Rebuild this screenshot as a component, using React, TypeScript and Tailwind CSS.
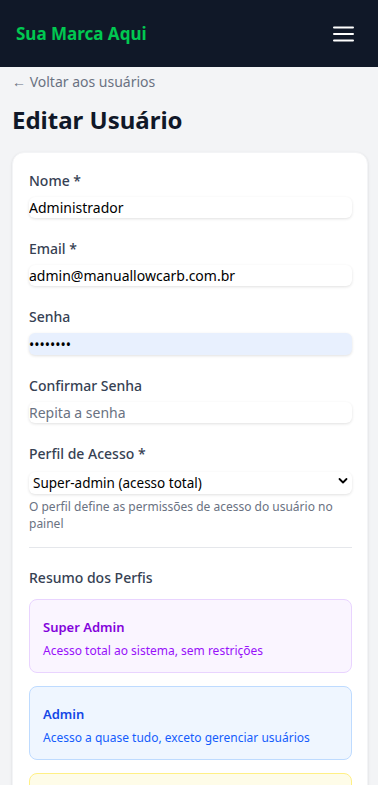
import React from "react";

function Field({ label, children }: { label: string; children: React.ReactNode }) {
  return (
    <div className="flex flex-col">
      <label className="text-sm leading-5 font-medium text-gray-700 mb-[6px]">{label}</label>
      {children}
    </div>
  );
}

const inputCls =
  "w-full h-[21px] rounded-md shadow-[0_1px_3px_rgba(0,0,0,0.12)] text-[14px] leading-[21px] text-black outline-none bg-white";

export default function App() {
  return (
    <div className="min-h-[785px] bg-gray-100" style={{ fontFamily: '"Noto Sans", "Open Sans", sans-serif' }}>
      <header className="h-[67px] bg-gray-900 flex items-center justify-between pl-4 pr-[24px]">
        <span className="text-green-500 font-bold text-[17px]">Sua Marca Aqui</span>
        <svg width="21" height="16" viewBox="0 0 21 16">
          <path d="M1 1.5h19M1 8h19M1 14.5h19" stroke="white" strokeWidth="2" strokeLinecap="round" />
        </svg>
      </header>
      <main className="pl-3 pr-[10px] pt-[5px]">
        <a className="block text-sm leading-5 text-gray-500">← Voltar aos usuários</a>
        <h1 className="mt-3 text-2xl leading-8 font-bold text-gray-900">Editar Usuário</h1>
        <div className="mt-4 bg-white rounded-xl shadow-sm border border-gray-100 pl-4 pr-[15px] pt-[18px] pb-4">
          <div className="flex flex-col gap-[21px]">
            <Field label="Nome *">
              <input className={inputCls} defaultValue="Administrador" />
            </Field>
            <Field label="Email *">
              <input className={inputCls} defaultValue="admin@manuallowcarb.com.br" />
            </Field>
            <Field label="Senha">
              <input type="password" className={inputCls + " !bg-[#e8f0fe] h-[22px]"} defaultValue="12345678" />
            </Field>
            <Field label="Confirmar Senha">
              <input type="password" className={inputCls + " placeholder:text-gray-500"} placeholder="Repita a senha" />
            </Field>
            <div className="flex flex-col">
              <label className="text-sm leading-5 font-medium text-gray-700 mb-[6px]">Perfil de Acesso *</label>
              <div className="relative">
                <select className="w-full h-[22px] appearance-none rounded-md bg-white shadow-[0_1px_3px_rgba(0,0,0,0.12)] text-[13.5px] leading-[22px] text-black pl-1 outline-none">
                  <option>Super-admin (acesso total)</option>
                  <option>Admin</option>
                </select>
                <svg className="absolute right-[4px] top-[6px] pointer-events-none" width="10" height="10" viewBox="0 0 10 10">
                  <path d="M1.5 3l3.5 3.5L8.5 3" stroke="black" strokeWidth="1.8" fill="none" strokeLinecap="round" strokeLinejoin="round" />
                </svg>
              </div>
              <p className="mt-[4px] text-[12px] leading-[17px] text-gray-500">
                O perfil define as permissões de acesso do usuário no painel
              </p>
            </div>
          </div>
          <div className="mt-[15px] border-t border-gray-200" />
          <h3 className="mt-[20px] text-sm leading-5 font-medium text-gray-700">Resumo dos Perfis</h3>
          <div className="mt-[11px] flex flex-col gap-[13px]">
            <div className="rounded-lg border border-purple-200 bg-purple-50 px-[13px] pt-[17px] pb-[11px]">
              <div className="text-[13px] leading-5 font-semibold text-purple-700">Super Admin</div>
              <div className="mt-[4px] text-[12px] leading-5 text-purple-600">Acesso total ao sistema, sem restrições</div>
            </div>
            <div className="rounded-lg border border-blue-200 bg-blue-50 px-[13px] pt-[17px] pb-[11px]">
              <div className="text-[13px] leading-5 font-semibold text-blue-700">Admin</div>
              <div className="mt-[4px] text-[12px] leading-5 text-blue-600">Acesso a quase tudo, exceto gerenciar usuários</div>
            </div>
            <div className="rounded-lg border border-yellow-200 bg-yellow-50 px-[13px] pt-[17px] pb-[11px]">
              <div className="text-[13px] leading-5 font-semibold text-yellow-700">Editor</div>
              <div className="mt-[4px] text-[12px] leading-5 text-yellow-600">Pode gerenciar conteúdo</div>
            </div>
          </div>
        </div>
      </main>
    </div>
  );
}
